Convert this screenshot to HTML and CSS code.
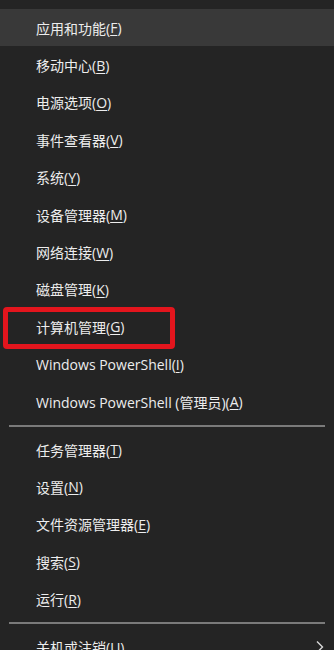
FILE: index.html
```html
<!DOCTYPE html>
<html lang="zh-CN">

<head>
    <meta charset="UTF-8">
    <meta name="viewport" content="width=device-width, initial-scale=1.0">
    <title>Win+X 菜单</title>
    <link rel="stylesheet" href="styles.css">
</head>

<body>
    <div class="menu">
        <ul class="group">
            <li class="item active">应用和功能(<u>F</u>)</li>
            <li class="item">移动中心(<u>B</u>)</li>
            <li class="item">电源选项(<u>O</u>)</li>
            <li class="item">事件查看器(<u>V</u>)</li>
            <li class="item">系统(<u>Y</u>)</li>
            <li class="item">设备管理器(<u>M</u>)</li>
            <li class="item">网络连接(<u>W</u>)</li>
            <li class="item">磁盘管理(<u>K</u>)</li>
            <li class="item marked">计算机管理(<u>G</u>)</li>
            <li class="item">Windows PowerShell(<u>I</u>)</li>
            <li class="item">Windows PowerShell (管理员)(<u>A</u>)</li>
        </ul>
        <div class="divider"></div>
        <ul class="group">
            <li class="item">任务管理器(<u>T</u>)</li>
            <li class="item">设置(<u>N</u>)</li>
            <li class="item">文件资源管理器(<u>E</u>)</li>
            <li class="item">搜索(<u>S</u>)</li>
            <li class="item">运行(<u>R</u>)</li>
        </ul>
        <div class="divider"></div>
        <ul class="group">
            <li class="item submenu">
                <span>关机或注销(<u>U</u>)</span>
                <svg class="chevron" width="10" height="14" viewBox="0 0 10 14">
                    <path d="M2 1.5 L7.5 7 L2 12.5" fill="none" stroke="#d8d8d8" stroke-width="1.4"/>
                </svg>
            </li>
        </ul>
    </div>
</body>

</html>
```

FILE: styles.css
```css
:root {
    --bg: #242424;
    --bg-top: #1d1d1d;
    --hover: #393939;
    --text: #ededed;
    --divider: #7a7a7a;
    --mark: #e3151d;
}

* {
    margin: 0;
    padding: 0;
    box-sizing: border-box;
}

body {
    width: 334px;
    height: 650px;
    overflow: hidden;
    background: var(--bg);
    font-family: 'Open Sans', 'Noto Sans CJK SC', sans-serif;
    font-size: 14px;
    color: var(--text);
}

.menu {
    padding-top: 9px;
    border-top: 9px solid var(--bg-top);
    margin-top: -9px;
}

.group {
    list-style: none;
}

.item {
    position: relative;
    display: flex;
    align-items: center;
    height: 37.4px;
    padding-left: 36px;
    padding-right: 9px;
    white-space: nowrap;
}

.item u {
    text-decoration-thickness: 1px;
    text-underline-offset: 2px;
}

.item.active {
    background: var(--hover);
}

.item.marked::after {
    content: "";
    position: absolute;
    left: 3px;
    top: -1px;
    width: 162px;
    bottom: -3px;
    border: 5px solid var(--mark);
    border-radius: 4px;
}

.submenu {
    justify-content: space-between;
}

.divider {
    height: 10.6px;
    display: flex;
    align-items: center;
    padding: 0 9px;
}

.divider::before {
    content: "";
    flex: 1;
    height: 2px;
    background: var(--divider);
}
```
